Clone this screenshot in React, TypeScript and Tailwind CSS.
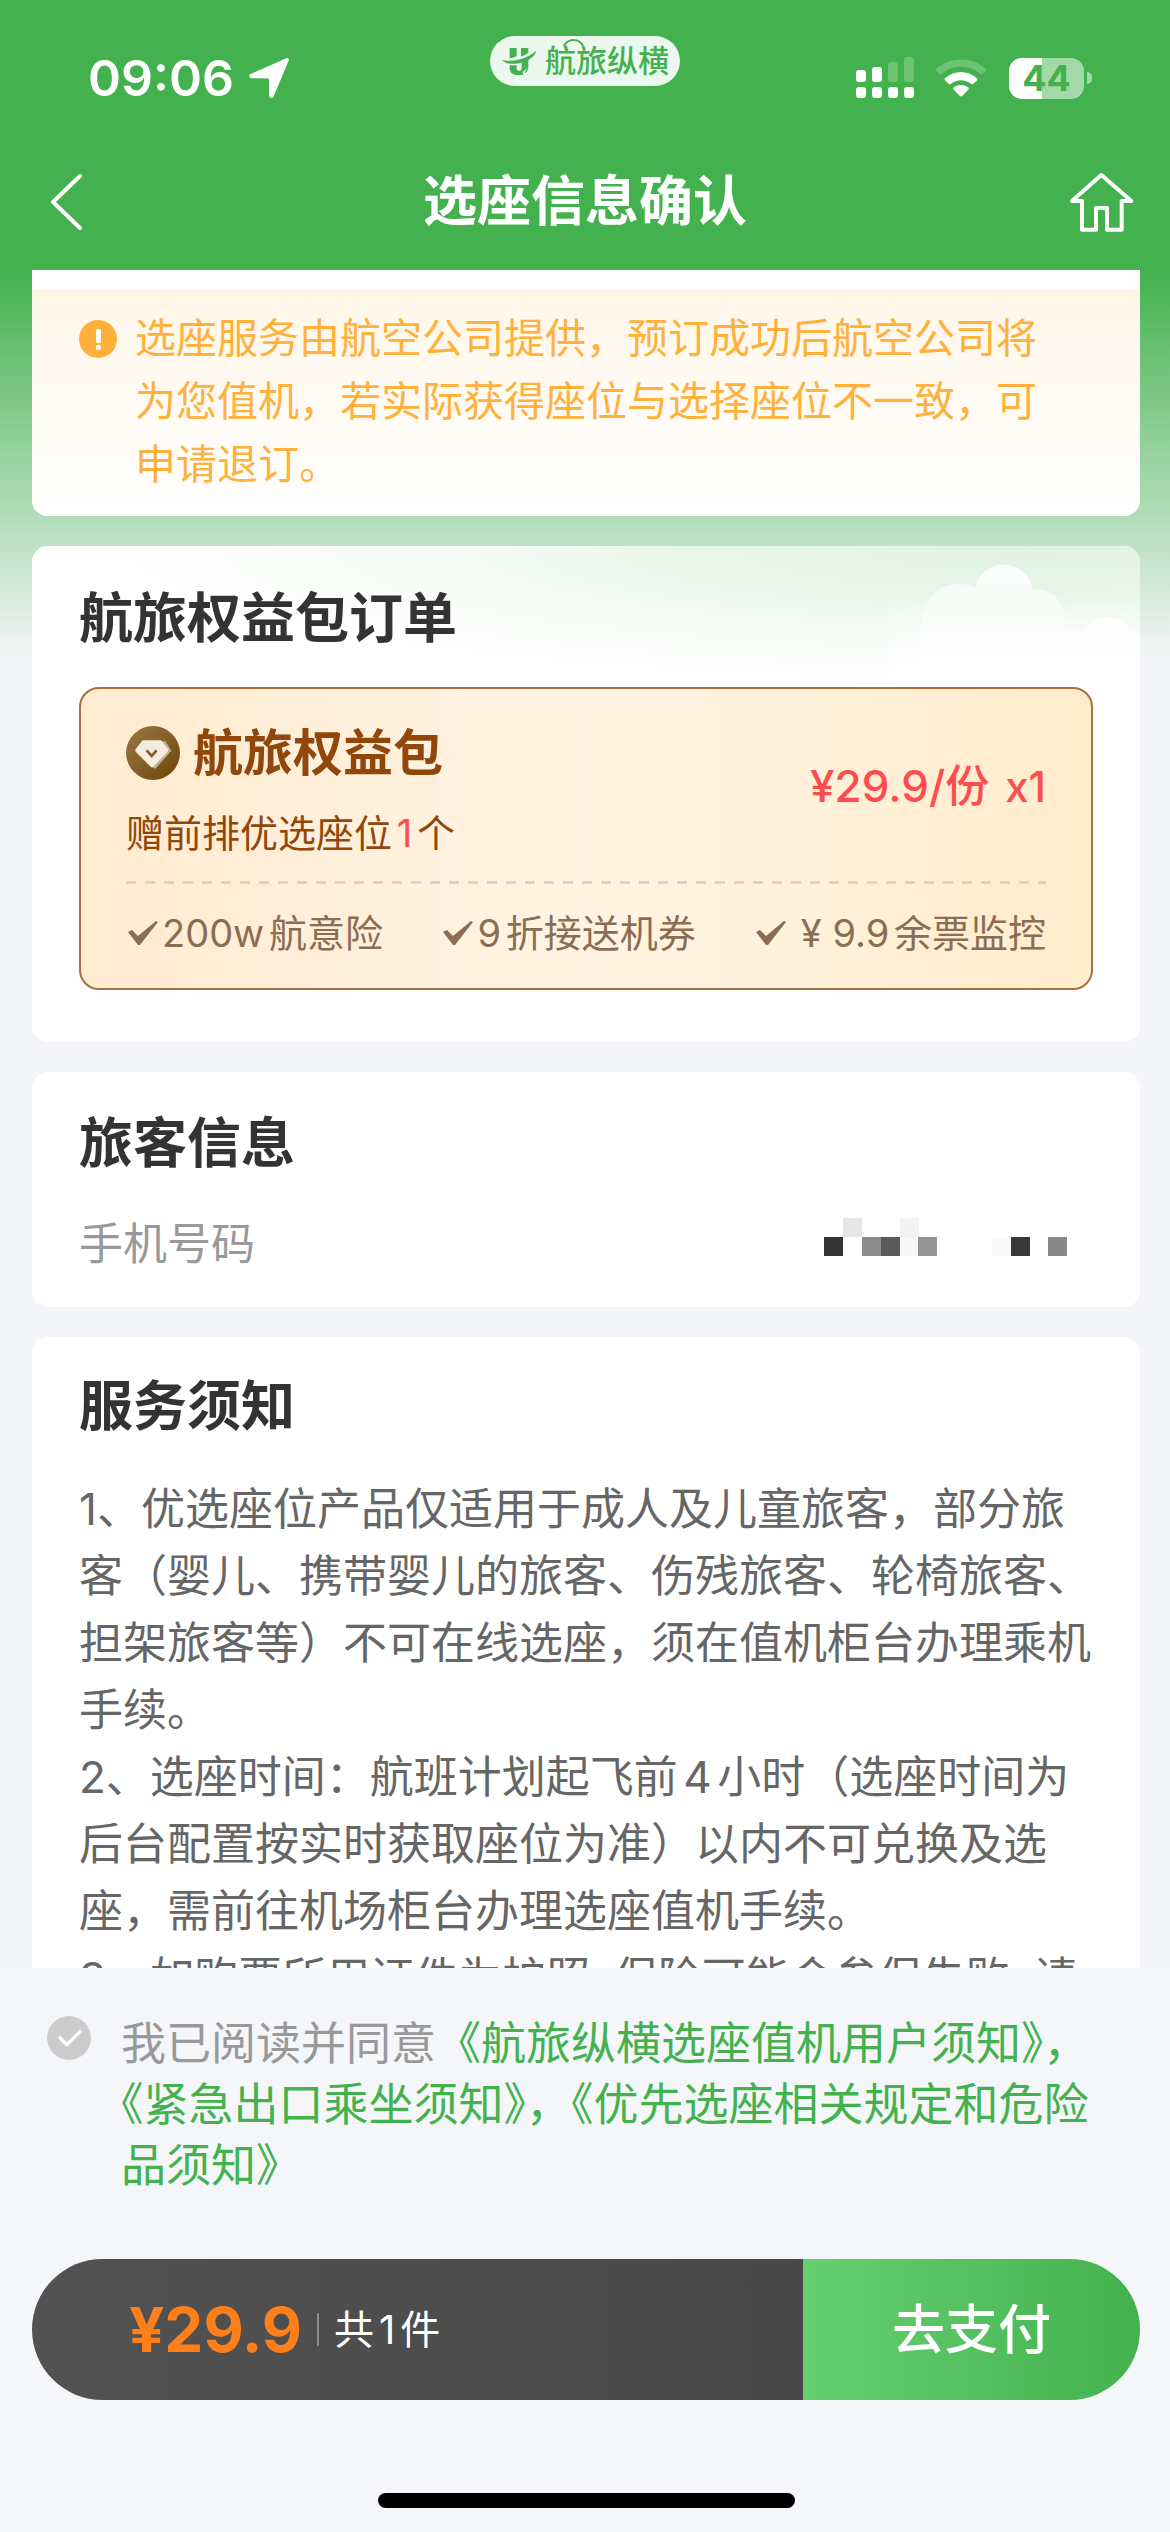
import type { ReactNode } from "react";

const benefits = ["200w航意险", "9折接送机券", "\u00a0¥ 9.9余票监控"];

const mosaic = [
  { x: 19, y: 0, fill: "#e6e6e6" },
  { x: 76, y: 0, fill: "#f2f2f2" },
  { x: 0, y: 19, fill: "#333333" },
  { x: 38, y: 19, fill: "#8c8c8c" },
  { x: 57, y: 19, fill: "#595959" },
  { x: 76, y: 19, fill: "#f7f7f7" },
  { x: 94, y: 19, fill: "#949494" },
  { x: 168, y: 19, fill: "#fafafa" },
  { x: 187, y: 19, fill: "#383838" },
  { x: 224, y: 19, fill: "#878787" },
];

function StatusBar() {
  return (
    <div className="grid h-[134px] grid-cols-3 items-center px-[78px] pt-[22px] text-white">
      <div className="flex items-center gap-[14px] pl-[10px]">
        <span className="text-[50px] leading-none font-semibold">09:06</span>
        <svg className="size-[42px]" viewBox="0 0 42 42" fill="currentColor" aria-hidden="true">
          <path d="M38.4 1.3c1.8-.7 3 .5 2.3 2.3L25.6 39.4c-1 2.2-4.4 2-4.4-.8l-.2-15.4c0-1-.5-1.6-1.5-1.6L3.6 21.2c-2.6-.1-3.3-3.2-.8-4.3z" />
        </svg>
      </div>
      <div className="mt-[14px] flex h-[50px] w-[190px] items-center justify-center gap-[8px] self-start justify-self-center rounded-full bg-[#ecf7ee] text-[#43b24e]">
        <svg className="h-[30px] w-[36px] shrink-0" viewBox="0 0 108 90" fill="currentColor" aria-hidden="true">
          <path d="M26 6h21v25c-7 3-14 5-21 6z" />
          <path d="M60 6h22v14c-7 5-14 9-22 12z" />
          <path d="M3 41c24 8 70 1 103-27-2 9-8 17-18 24-25 17-71 23-85 3z" />
          <path d="M26 57c7 1 14 1 21 0v8c0 6 2 9 7 9 6 0 8-3 8-9V51c7-3 14-7 20-11v22c0 10-4 17-12 20l9-16-14 12 2 9H50c-15 0-24-8-24-22z" />
        </svg>
        <span className="relative text-[31px] leading-[40px] font-medium whitespace-nowrap">
          航旅纵横
          <svg className="absolute -top-[3px] left-[18px] h-[9px] w-[21px]" viewBox="0 0 21 9" fill="none" stroke="currentColor" strokeWidth="2" aria-hidden="true">
            <path d="M1 8C5 0 16 0 20 8" />
          </svg>
        </span>
      </div>
      <div className="flex items-center justify-end">
        <svg className="h-[42px] w-[58px]" viewBox="0 0 58 42" fill="currentColor" aria-hidden="true">
          <rect x="0" y="13" width="10" height="12" rx="3" />
          <rect x="16" y="10" width="10" height="15" rx="3" />
          <rect x="32" y="5" width="10" height="20" rx="3" opacity=".22" />
          <rect x="48" y="0" width="10" height="25" rx="3" opacity=".22" />
          <rect x="0" y="30" width="10" height="11" rx="3" />
          <rect x="16" y="30" width="10" height="11" rx="3" />
          <rect x="32" y="30" width="10" height="11" rx="3" />
          <rect x="48" y="30" width="10" height="11" rx="3" />
        </svg>
        <svg className="ml-[22px] h-[38px] w-[50px]" viewBox="0 0 150 114" fill="currentColor" aria-hidden="true">
          <path opacity=".22" d="M2 29C42-8 108-8 148 29c3 3 3 5 0 8l-8 8c-2 2-4 2-7 0-33-29-83-29-116 0-3 2-5 2-7 0l-8-8c-3-3-3-5 0-8z" />
          <path d="M28 57c27-24 67-24 94 0 3 3 3 5 0 8l-10 9c-2 2-5 2-7 0-18-14-42-14-60 0-2 2-5 2-7 0l-10-9c-3-3-3-5 0-8z" />
          <path d="M54 85c13-9 29-9 42 0 3 2 3 5 0 8L79 110c-3 3-5 3-8 0L54 93c-3-3-3-6 0-8z" />
        </svg>
        <span className="ml-[23px] flex h-[41px] w-[75px] items-center justify-center rounded-[13px] bg-linear-to-r from-white from-44% to-[#a1d9a7] to-44% text-[36px] leading-none font-bold text-[#43b24e]">
          44
        </span>
        <span className="ml-[3px] h-[12px] w-[5px] rounded-r-full bg-[#a1d9a7]" />
      </div>
    </div>
  );
}

function NavBar() {
  return (
    <nav className="flex h-[136px] items-center justify-between px-[34px] text-white">
      <button type="button" aria-label="返回" className="w-[69px] pl-[14px]">
        <svg className="h-[58px] w-[38px]" viewBox="0 0 38 58" fill="none" stroke="currentColor" strokeWidth="4" strokeLinecap="round" strokeLinejoin="round">
          <path d="M32 3 5 29l27 26" />
        </svg>
      </button>
      <h1 className="text-[54px] leading-[70px] font-bold">选座信息确认</h1>
      <button type="button" aria-label="首页">
        <svg className="h-[61px] w-[69px]" viewBox="52 37 207 183" fill="none" stroke="currentColor" strokeWidth="12" strokeLinejoin="round">
          <path d="M155 46 245 124H216V210H172V145H139V210H97V124H67Z" />
        </svg>
      </button>
    </nav>
  );
}

function CardTitle({ children }: { children: ReactNode }) {
  return <h2 className="relative text-[54px] leading-[70px] font-bold text-[#333]">{children}</h2>;
}

function Clouds() {
  return (
    <div className="absolute inset-0 overflow-hidden rounded-[16px]" aria-hidden="true">
      <div className="absolute inset-x-0 top-0 h-[140px] bg-[radial-gradient(ellipse_85%_100%_at_90%_0%,#dff2e1_0%,#e8f6ea_35%,#f8fcf8_70%,#ffffff_100%)]" />
      <svg className="absolute top-0 right-0 h-[150px] w-[250px]" viewBox="0 0 250 150">
        <defs>
          <linearGradient id="cloud" x1="0" y1="0" x2="0" y2="1">
            <stop offset="0" stopColor="#fff" stopOpacity=".95" />
            <stop offset="1" stopColor="#fff" stopOpacity=".4" />
          </linearGradient>
          <linearGradient id="fade" x1="0" y1="0" x2="0" y2="1">
            <stop offset="0" stopColor="#fff" stopOpacity="0" />
            <stop offset="1" stopColor="#fff" />
          </linearGradient>
        </defs>
        <path d="M30 150C28 70 32 40 68 38q10 0 18 4c4-30 50-32 57 1 24 0 36 18 31 46l-12 61z" fill="url(#cloud)" opacity=".7" />
        <path d="M86 42c4-30 50-32 57 1q-28 26-57-1z" fill="url(#cloud)" opacity=".6" />
        <path d="M145 150c-2-50 14-72 48-64 10-20 38-20 48 0q6 0 9 3v61z" fill="url(#cloud)" opacity=".9" />
        <rect y="50" width="250" height="100" fill="url(#fade)" />
      </svg>
    </div>
  );
}

function PackageBox() {
  return (
    <div className="relative mt-[33px] rounded-[20px] border-2 border-[#a8703c] bg-linear-to-r from-[#ffebd0] via-[#fff4e3] to-[#ffeccd] px-[45px] pt-[37px] pb-[31px]">
      <div className="flex items-center justify-between">
        <div>
          <h3 className="flex items-center gap-[13px] text-[50px] leading-[54px] font-bold text-[#91470b]">
            <svg className="size-[54px]" viewBox="0 0 162 162" aria-hidden="true">
              <defs>
                <linearGradient id="badge" x1="0" y1="0" x2="1" y2="1">
                  <stop offset="0" stopColor="#9c7440" />
                  <stop offset=".5" stopColor="#86602b" />
                  <stop offset="1" stopColor="#6b4200" />
                </linearGradient>
              </defs>
              <circle cx="81" cy="81" r="81" fill="url(#badge)" />
              <path d="M60 46h58l18 28-48 54-12-6z" fill="#c4b095" />
              <path d="M50 43h56l20 26q2 4-1 8L82 122q-4 4-8 0L29 77q-3-4 0-8z" fill="#f4ecdf" />
              <path d="m62 73 15 17 15-17" fill="none" stroke="#86602b" strokeWidth="8" />
            </svg>
            航旅权益包
          </h3>
          <p className="mt-[29px] text-[38px] leading-[48px] text-[#91470b]">
            赠前排优选座位<span className="text-[#ff4d4f]">1</span>个
          </p>
        </div>
        <p className="flex items-baseline gap-[16px] pb-[10px] font-medium text-[#ff4d4f]">
          <span className="text-[44px] leading-[54px]">¥29.9/份</span>
          <span className="text-[42px]">x1</span>
        </p>
      </div>
      <svg className="mt-[24px] block h-[3px] w-full" aria-hidden="true">
        <line x1="0" y1="1.5" x2="100%" y2="1.5" stroke="#e6d3b3" strokeWidth="3" strokeDasharray="10 9" />
      </svg>
      <ul className="mt-[25px] flex justify-between text-[38px] leading-[48px] text-[#8a6d52]">
        {benefits.map((item) => (
          <li key={item} className="flex items-center gap-[2px]">
            <svg className="h-[26px] w-[34px]" viewBox="0 0 34 26" fill="currentColor" aria-hidden="true">
              <path d="M2 12 6 10l6 6L30 1l2 1L14 25h-2z" />
            </svg>
            {item}
          </li>
        ))}
      </ul>
    </div>
  );
}

function Agreement() {
  return (
    <div className="flex items-start gap-[30px] pr-[36px] pl-[15px]">
      <span className="relative mt-[3px] size-[44px] shrink-0">
        <input id="agree" type="checkbox" className="block size-[44px] appearance-none rounded-full bg-[#ccc] checked:bg-[#43b24e]" />
        <svg className="pointer-events-none absolute inset-0" viewBox="0 0 132 132" fill="none" stroke="#fff" strokeWidth="10" aria-hidden="true">
          <path d="m36 62 23 24 43-42" />
        </svg>
      </span>
      <p className="text-[45px] leading-[61px] text-[#43b24e] [text-spacing-trim:trim-start]">
        <label htmlFor="agree" className="text-[#999]">我已阅读并同意</label>
        <a href="#user">《航旅纵横选座值机用户须知》</a>，<a href="#exit">《紧急出口乘坐须知》</a>，<a href="#danger">《优先选座相关规定和危险品须知》</a>
      </p>
    </div>
  );
}

export default function App() {
  return (
    <div lang="zh-CN" className="flex h-screen flex-col bg-[#f5f6fa] font-['Inter','Noto_Sans_CJK_SC',sans-serif] [text-autospace:normal]">
      <header className="shrink-0 bg-[#43b24e]">
        <StatusBar />
        <NavBar />
      </header>

      <main className="min-h-0 flex-1 overflow-y-auto bg-[#f4f5f8] [scrollbar-width:none]">
        <div className="flex flex-col gap-[30px] bg-[linear-gradient(to_bottom,#43b24e_0,#f4f5f8_390px)] pr-[30px] pl-[32px]">
          <section className="overflow-hidden rounded-b-[16px] bg-white pt-[19px]">
            <div className="flex gap-[18px] bg-linear-to-b from-[#fff6e8] to-white pt-[18px] pr-[80px] pb-[20px] pl-[47px]">
              <svg className="mt-[13px] size-[38px] shrink-0" viewBox="0 0 38 38" aria-hidden="true">
                <circle cx="19" cy="19" r="19" fill="#ffb13b" />
                <rect x="17" y="9" width="5" height="14" rx="2" fill="#fff" />
                <rect x="17" y="25" width="5" height="5" rx="2" fill="#fff" />
              </svg>
              <p className="text-[41px] leading-[63px] text-[#ffb13b]">
                选座服务由航空公司提供，预订成功后航空公司将为您值机，若实际获得座位与选择座位不一致，可申请退订。
              </p>
            </div>
          </section>

          <section className="relative rounded-[16px] bg-white px-[47px] pt-[38px] pb-[52px]">
            <Clouds />
            <CardTitle>航旅权益包订单</CardTitle>
            <PackageBox />
          </section>

          <section className="rounded-[16px] bg-white px-[47px] pt-[37px] pb-[37px]">
            <CardTitle>旅客信息</CardTitle>
            <div className="mt-[39px] flex items-start justify-between pr-[26px] text-[44px] leading-[52px] text-[#999]">
              <span>手机号码</span>
              <svg className="h-[38px] w-[243px]" viewBox="0 0 243 38" role="img" aria-label="已隐藏的手机号码">
                {mosaic.map((cell) => (
                  <rect key={`${cell.x}-${cell.y}`} x={cell.x} y={cell.y} width="19" height="19" fill={cell.fill} />
                ))}
              </svg>
            </div>
          </section>

          <section className="rounded-[16px] bg-white px-[47px] pt-[35px] pb-[40px]">
            <CardTitle>服务须知</CardTitle>
            <div className="mt-[34px] text-[44px] leading-[67px] text-[#666]">
              <p>1、优选座位产品仅适用于成人及儿童旅客，部分旅客（婴儿、携带婴儿的旅客、伤残旅客、轮椅旅客、担架旅客等）不可在线选座，须在值机柜台办理乘机手续。</p>
              <p>2、选座时间：航班计划起飞前4小时（选座时间为后台配置按实时获取座位为准）以内不可兑换及选座，需前往机场柜台办理选座值机手续。</p>
              <p>3、如购票所用证件为护照,保险可能会参保失败,请</p>
            </div>
          </section>
        </div>
      </main>

      <footer className="shrink-0 pt-[45px] pr-[30px] pb-[24px] pl-[32px]">
        <Agreement />
        <div className="mt-[63px] flex h-[141px] overflow-hidden rounded-full">
          <div className="flex flex-1 items-center bg-linear-to-r from-[#525252] to-[#484848] pl-[97px] text-white">
            <strong className="text-[62px] leading-none font-bold text-[#ff7f1a]">¥29.9</strong>
            <span className="mx-[15px] h-[33px] w-[2px] bg-[#8a8a8a]" />
            <span className="text-[40px] leading-[48px]">共1件</span>
          </div>
          <button type="button" className="w-[337px] bg-linear-to-r from-[#65cf70] to-[#43b24e] text-[53px] leading-[70px] font-medium text-white">
            去支付
          </button>
        </div>
        <div className="mx-auto mt-[93px] h-[15px] w-[417px] rounded-full bg-black" />
      </footer>
    </div>
  );
}
